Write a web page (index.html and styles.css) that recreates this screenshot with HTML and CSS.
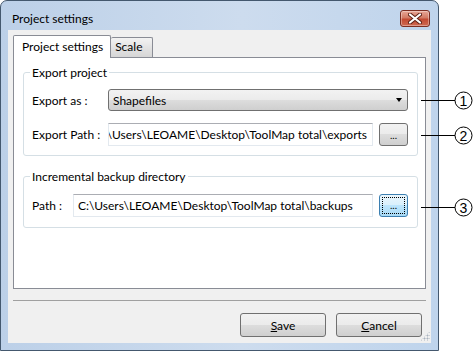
FILE: index.html
```html
<!DOCTYPE html>
<html lang="en">
<head>
  <meta charset="UTF-8">
  <title>Project settings</title>
  <link rel="stylesheet" href="styles.css">
</head>
<body>
  <div class="window">
    <div class="titlebar">
      <span class="title">Project settings</span>
      <button class="close-btn" title="Close">
        <svg width="14" height="11" viewBox="0 0 14 11">
          <path d="M2 1.5 L12 9.5 M12 1.5 L2 9.5" stroke="#5a1f14" stroke-width="4" stroke-linecap="round"/>
          <path d="M2 1.5 L12 9.5 M12 1.5 L2 9.5" stroke="#fff" stroke-width="2.2" stroke-linecap="round"/>
        </svg>
      </button>
    </div>

    <div class="client">
      <div class="tabs">
        <div class="tab active">Project settings</div>
        <div class="tab">Scale</div>
      </div>

      <div class="tab-page">
        <fieldset class="group">
          <legend>Export project</legend>
          <div class="row">
            <label class="row-label">Export as :</label>
            <div class="combo">
              <span>Shapefiles</span>
              <span class="arrow"></span>
            </div>
          </div>
          <div class="row row-gap">
            <label class="row-label">Export Path :</label>
            <div class="textbox scrolled"><span>\Users\LEOAME\Desktop\ToolMap total\exports</span></div>
            <button class="browse">...</button>
          </div>
        </fieldset>

        <fieldset class="group group-backup">
          <legend>Incremental backup directory</legend>
          <div class="row">
            <label class="row-label short">Path :</label>
            <div class="textbox"><span>C:\Users\LEOAME\Desktop\ToolMap total\backups</span></div>
            <button class="browse focused"><span class="focus-rect">...</span></button>
          </div>
        </fieldset>
      </div>

      <div class="separator"></div>

      <div class="footer">
        <button class="btn"><u>S</u>ave</button>
        <button class="btn"><u>C</u>ancel</button>
      </div>
      <span class="grip"></span>
    </div>
  </div>

  <!-- repères numérotés -->
  <svg class="callouts" width="475" height="351" viewBox="0 0 475 351">
    <g stroke="#000" stroke-width="1" fill="none">
      <line x1="421" y1="100.5" x2="455" y2="100.5"/>
      <line x1="421" y1="135.5" x2="455" y2="135.5"/>
      <line x1="421" y1="207.5" x2="455" y2="207.5"/>
      <circle cx="463.5" cy="100.5" r="8.5"/>
      <circle cx="463.5" cy="135.5" r="8.5"/>
      <circle cx="463.5" cy="207.5" r="8.5"/>
    </g>
    <g class="callout-num" text-anchor="middle">
      <text x="463.5" y="105.5">1</text>
      <text x="463.5" y="140.5">2</text>
      <text x="463.5" y="212.5">3</text>
    </g>
  </svg>
</body>
</html>
```

FILE: styles.css
```css
/* Base */
* {
  box-sizing: border-box;
  margin: 0;
  padding: 0;
}

body {
  position: relative;
  width: 475px;
  height: 351px;
  overflow: hidden;
  background: #fff;
  font-family: Lato, "Open Sans", sans-serif;
  font-size: 12px;
  color: #000;
}

button {
  font: inherit;
  color: inherit;
}

/* Fenêtre */
.window {
  display: flex;
  flex-direction: column;
  width: 439px;
  height: 351px;
  padding: 0 7px 7px;
  border: 1px solid #44586e;
  border-radius: 7px 7px 0 0;
  background: linear-gradient(to right, #bcd0e8, #cddcee 55%, #bfd4ec);
}

.titlebar {
  display: flex;
  align-items: flex-start;
  justify-content: space-between;
  height: 29px;
  padding: 9px 1px 0 4px;
}

.title {
  line-height: 17px;
}

.close-btn {
  display: flex;
  align-items: center;
  justify-content: center;
  width: 30px;
  height: 17px;
  border: 1px solid #7b2e22;
  border-radius: 3px;
  background: linear-gradient(to bottom, #e8a797 0%, #d27a64 45%, #c24a32 55%, #cf6a52 100%);
  box-shadow: inset 0 0 0 1px rgba(255, 255, 255, 0.35);
}

.client {
  position: relative;
  display: flex;
  flex-direction: column;
  flex: 1;
  min-width: 0;
  padding: 5px 5px 0;
  background: #f0f0f0;
}

/* Onglets */
.tabs {
  display: flex;
  align-items: flex-end;
  height: 22px;
}

.tab {
  position: relative;
  height: 20px;
  padding: 0 10px 0 4px;
  line-height: 18px;
  border: 1px solid #898c95;
  border-bottom: none;
  border-left: none;
  border-radius: 2px 2px 0 0;
  background: linear-gradient(to bottom, #f3f3f3, #e3e3e3 50%, #d6d6d6);
}

.tab.active {
  z-index: 1;
  height: 23px;
  margin-bottom: -1px;
  padding: 0 7px 0 8px;
  line-height: 22px;
  border-left: 1px solid #898c95;
  background: #fff;
}

.tab-page {
  height: 232px;
  min-width: 0;
  padding: 7px 7px 0 9px;
  border: 1px solid #898c95;
  background: #fff;
}

/* Groupes */
.group {
  min-width: 0;
  padding: 9px 9px 9px 8px;
  border: 1px solid #d5dfe5;
  border-radius: 3px;
}

.group legend {
  margin-left: -2px;
  padding: 0 2px;
  line-height: 15px;
}

.group-backup {
  margin-top: 13px;
  padding-top: 10px;
  padding-bottom: 10px;
}

.row {
  display: flex;
  align-items: center;
  min-width: 0;
}

.row-gap {
  margin-top: 12px;
}

.row-label {
  flex: none;
  width: 76px;
}

.row-label.short {
  width: 41px;
}

.combo {
  display: flex;
  align-items: center;
  justify-content: space-between;
  flex: 1;
  height: 22px;
  padding: 0 5px 0 4px;
  border: 1px solid #707070;
  border-radius: 3px;
  background: linear-gradient(to bottom, #f2f2f2, #ebebeb 50%, #dddddd 50%, #cfcfcf);
}

.combo .arrow {
  width: 0;
  height: 0;
  border-left: 3.5px solid transparent;
  border-right: 3.5px solid transparent;
  border-top: 4px solid #000;
}

.textbox {
  display: flex;
  align-items: center;
  flex: 1;
  min-width: 0;
  height: 23px;
  padding: 0 5px 0 4px;
  overflow: hidden;
  white-space: nowrap;
  border: 1px solid #e3e9ef;
  border-top-color: #abadb3;
  background: #fff;
}

.textbox.scrolled {
  justify-content: flex-end;
}

.textbox span {
  flex: none;
}

.browse {
  flex: none;
  width: 29px;
  height: 23px;
  margin-left: 6px;
  font-size: 10px;
  border: 1px solid #707070;
  border-radius: 3px;
  background: linear-gradient(to bottom, #f2f2f2, #ebebeb 50%, #dddddd 50%, #cfcfcf);
}

.browse.focused {
  padding: 2px;
  border-color: #3c7fb1;
  background: linear-gradient(to bottom, #eaf6fd, #d9f0fc 50%, #bee6fd 50%, #a7d9f5);
}

.focus-rect {
  display: block;
  height: 100%;
  line-height: 15px;
  border: 1px dotted #000;
}

/* Bas de fenêtre */
.separator {
  margin-top: 11px;
  border-top: 1px solid #a0a0a0;
}

.footer {
  display: flex;
  justify-content: flex-end;
  gap: 10px;
  margin-top: 12px;
  padding-right: 4px;
}

.btn {
  width: 86px;
  height: 24px;
  border: 1px solid #707070;
  border-radius: 3px;
  background: linear-gradient(to bottom, #f2f2f2, #ebebeb 50%, #dddddd 50%, #cfcfcf);
}

.grip {
  position: absolute;
  right: 1px;
  bottom: 2px;
  width: 10px;
  height: 10px;
  background: radial-gradient(circle, #a9b3bf 0.8px, transparent 1.2px) 0 0 / 3px 3px;
  clip-path: polygon(100% 0, 100% 100%, 0 100%);
}

/* Repères */
.callouts {
  position: absolute;
  top: 0;
  left: 0;
  pointer-events: none;
}

.callout-num {
  font-family: "Liberation Sans", Arial, sans-serif;
  font-size: 14px;
  fill: #000;
}
```
